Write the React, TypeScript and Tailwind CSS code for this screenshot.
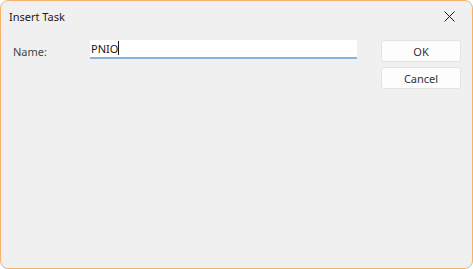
export default function App() {
  return (
    <div className="w-[473px] h-[269px] bg-white">
      <div
        className="w-full h-full rounded-[8px] border border-[#f5b26b] bg-[#f0f0f0] flex flex-col overflow-hidden"
        style={{ fontFamily: '"Noto Sans", "Segoe UI", sans-serif' }}
      >
        {/* title bar */}
        <div className="h-[30px] flex items-center justify-between pl-[8px] pr-[8px]">
          <span className="text-[11px] text-[#1a1a1a] leading-none">Insert Task</span>
          <button className="w-[30px] h-[24px] flex items-center justify-center">
            <svg width="11" height="11" viewBox="0 0 11 11" aria-hidden="true">
              <path d="M0.5 0.5 L10.5 10.5 M10.5 0.5 L0.5 10.5" stroke="#1a1a1a" strokeWidth="1" />
            </svg>
          </button>
        </div>

        {/* body */}
        <div className="flex pt-[9px] pl-[12px] pr-[11px]">
          <div className="flex items-start flex-1">
            <label className="w-[77px] pt-[6px] text-[11px] text-[#444444] leading-none">Name:</label>
            <div className="w-[267px] h-[19px] bg-white border-b-2 border-[#87b3dc] flex items-center pl-[1px] pb-[1px]">
              <span className="text-[11px] text-[#1a1a1a] leading-none">PNIO</span>
              <span className="w-px h-[14px] bg-[#1a1a1a]" />
            </div>
          </div>
          <div className="flex flex-col gap-[5px]">
            <button className="w-[80px] h-[22px] rounded-[3px] border border-[#e3e3e3] bg-[#fdfdfd] text-[11px] text-[#333333] leading-none">
              OK
            </button>
            <button className="w-[80px] h-[22px] rounded-[3px] border border-[#e3e3e3] bg-[#fdfdfd] text-[11px] text-[#333333] leading-none">
              Cancel
            </button>
          </div>
        </div>
      </div>
    </div>
  );
}
